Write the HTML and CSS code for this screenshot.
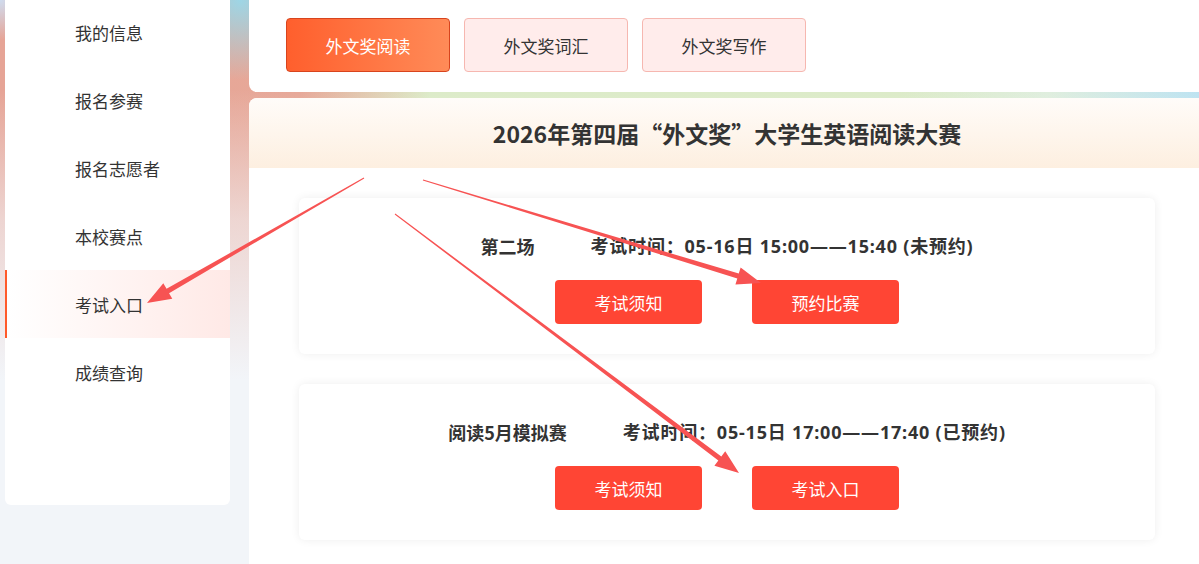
FILE: index.html
```html
<!DOCTYPE html>
<html lang="zh-CN">
<head>
    <meta charset="UTF-8">
    <meta name="viewport" content="width=device-width, initial-scale=1.0">
    <title>外文奖阅读 - 考试入口</title>
    <link rel="stylesheet" href="styles.css">
</head>
<body>
    <div class="layout">
        <aside class="sidebar">
            <a class="nav-item">我的信息</a>
            <a class="nav-item">报名参赛</a>
            <a class="nav-item">报名志愿者</a>
            <a class="nav-item">本校赛点</a>
            <a class="nav-item active">考试入口</a>
            <a class="nav-item">成绩查询</a>
        </aside>

        <main class="main">
            <div class="tabs-bar">
                <button class="tab active">外文奖阅读</button>
                <button class="tab">外文奖词汇</button>
                <button class="tab">外文奖写作</button>
            </div>

            <section class="panel">
                <div class="panel-head">
                    <h1>2026年第四届“外文奖”大学生英语阅读大赛</h1>
                </div>

                <div class="exam-card">
                    <div class="exam-info">
                        <span class="exam-name">第二场</span>
                        <span class="exam-time">考试时间：05-16日 15:00——15:40 (未预约)</span>
                    </div>
                    <div class="exam-actions">
                        <button class="btn">考试须知</button>
                        <button class="btn">预约比赛</button>
                    </div>
                </div>

                <div class="exam-card">
                    <div class="exam-info">
                        <span class="exam-name">阅读5月模拟赛</span>
                        <span class="exam-time">考试时间：05-15日 17:00——17:40 (已预约)</span>
                    </div>
                    <div class="exam-actions">
                        <button class="btn">考试须知</button>
                        <button class="btn">考试入口</button>
                    </div>
                </div>
            </section>
        </main>
    </div>

    <!-- 标注箭头 -->
    <svg class="marks" width="1199" height="564" viewBox="0 0 1199 564">
        <polygon points="363.75,177.57 166.55,288.83 163.31,283.2 147,303 172.29,298.8 169.05,293.17 364.25,178.43"/>
        <polygon points="422.85,180.48 737.31,278.39 735.42,284.61 761,283 740.66,267.39 738.77,273.61 423.15,179.52"/>
        <polygon points="394.7,214.4 718.33,460.56 714.42,465.75 739,473 725.24,451.37 721.33,456.56 395.3,213.6"/>
    </svg>
</body>
</html>
```

FILE: styles.css
```css
* {
    box-sizing: border-box;
}

body {
    margin: 0;
    height: 564px;
    overflow: hidden;
    position: relative;
    font-family: "Noto Sans CJK SC", "Microsoft YaHei", sans-serif;
    color: #333;
    background:
        linear-gradient(to bottom, rgba(242,245,249,0) 90px, rgba(242,245,249,0.6) 220px, #f2f5f9 380px),
        radial-gradient(circle at 240px 0, #9dd6e6 0, rgba(157,214,230,0) 80px),
        radial-gradient(circle at 0 0, #cfdcef 0, rgba(207,220,239,0) 40px),
        linear-gradient(to right, #e6a496 0, #e7a898 300px, #dcebc8 430px, #dcebc8 900px, #dfeede 1050px, #bde3f1 1199px);
}

.layout {
    display: grid;
    grid-template-columns: 225px 1fr;
    gap: 19px;
    padding-left: 5px;
}

/* 左侧菜单 */
.sidebar {
    background: white;
    height: 507px;
    margin-top: -2px;
    border-radius: 0 0 6px 6px;
    display: flex;
    flex-direction: column;
}

.nav-item {
    display: flex;
    align-items: center;
    height: 68px;
    padding-left: 68px;
    font-size: 17px;
    color: #333;
    border-left: 2px solid transparent;
    cursor: pointer;
}

.nav-item.active {
    border-left-color: #ff5a2a;
    background: linear-gradient(to right, #ffffff, #ffe9e6);
}

/* 顶部标签 */
.main {
    display: flex;
    flex-direction: column;
    gap: 6px;
}

.tabs-bar {
    background: white;
    height: 92px;
    border-radius: 0 0 0 8px;
    padding: 18px 0 0 37px;
    display: flex;
    gap: 14px;
}

.tab {
    width: 164px;
    height: 54px;
    border-radius: 4px;
    border: 1px solid #f6b7b0;
    background-color: #ffeceb;
    color: #333;
    font-family: inherit;
    font-size: 17px;
    cursor: pointer;
}

.tab.active {
    border-color: #d8441d;
    background: linear-gradient(to right, #ff5f2d, #ff8b58);
    color: white;
}

/* 内容区 */
.panel {
    background: white;
    border-radius: 8px 0 0 0;
    height: 480px;
}

.panel-head {
    height: 70px;
    border-radius: 8px 0 0 0;
    background: linear-gradient(to bottom, #fffcf9, #fdefe0);
    display: flex;
    align-items: center;
    justify-content: center;
    margin-bottom: 30px;
}

.panel-head h1 {
    margin: 0 0 0 6px;
    font-size: 23px;
    font-weight: bold;
    color: #333;
}

.exam-card {
    width: 856px;
    height: 156px;
    margin: 0 0 30px 50px;
    padding-top: 36px;
    background: white;
    border-radius: 6px;
    box-shadow: 0 0 10px rgba(0,0,0,0.07);
}

.exam-info {
    display: flex;
    justify-content: center;
    gap: 56px;
    height: 24px;
    line-height: 24px;
    font-size: 18px;
    font-weight: bold;
    color: #333;
    margin-bottom: 22px;
}

.exam-time {
    font-family: "Noto Sans", "Noto Sans CJK SC", sans-serif;
    letter-spacing: 0.8px;
}

.exam-actions {
    display: flex;
    justify-content: center;
    gap: 50px;
}

.btn {
    width: 147px;
    height: 44px;
    border: none;
    border-radius: 4px;
    background-color: #ff4534;
    color: white;
    font-family: inherit;
    font-size: 17px;
    cursor: pointer;
}

.btn:hover {
    opacity: 0.9;
}

.marks {
    position: absolute;
    top: 0;
    left: 0;
    pointer-events: none;
}

.marks polygon {
    fill: #f75353;
}
```
